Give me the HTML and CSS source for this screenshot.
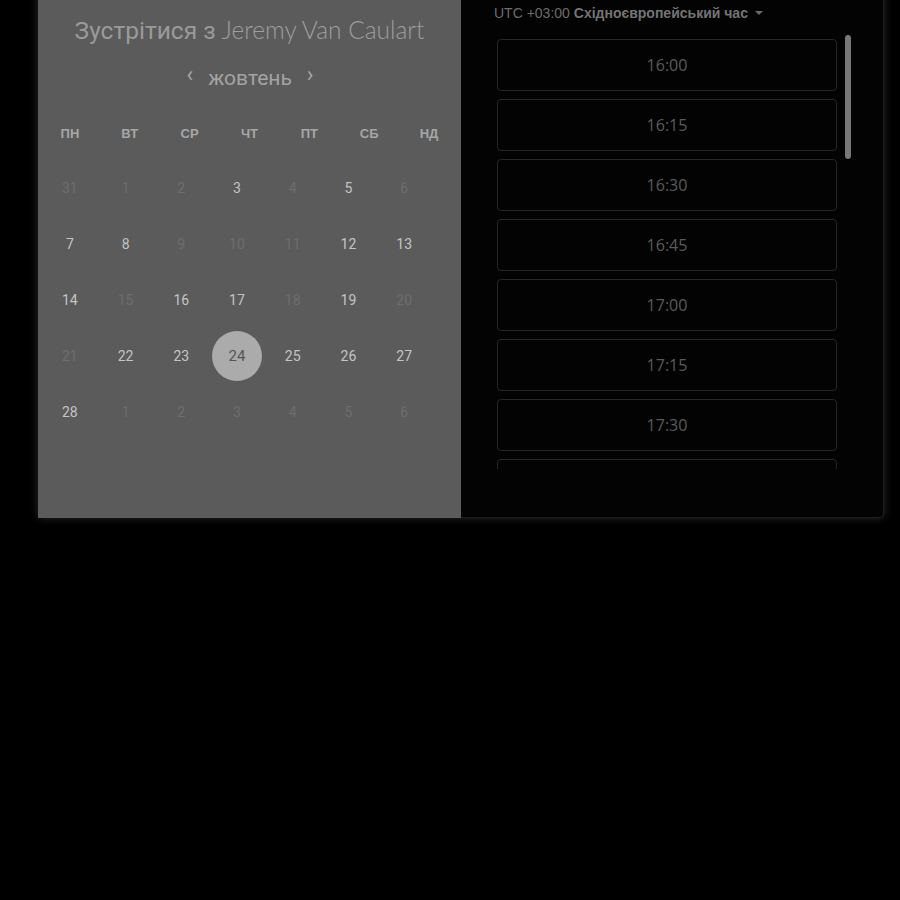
FILE: index.html
```html
<!DOCTYPE html>
<html lang="uk">
<head>
<meta charset="utf-8">
<title>Зустрітися з Jeremy Van Caulart</title>
<link rel="stylesheet" href="styles.css">
</head>
<body>
<div class="card">
  <section class="cal">
    <h1 class="title"><span class="cyr">Зустрітися з</span> <span class="name">Jeremy Van Caulart</span></h1>
    <div class="month">
      <span class="arrow">‹</span>
      <span class="mname">жовтень</span>
      <span class="arrow">›</span>
    </div>
    <div class="weekdays">
      <span>ПН</span><span>ВТ</span><span>СР</span><span>ЧТ</span><span>ПТ</span><span>СБ</span><span>НД</span>
    </div>
    <div class="days">
      <span class="off">31</span><span class="off">1</span><span class="off">2</span><span class="on">3</span><span class="off">4</span><span class="on">5</span><span class="off">6</span>
      <span class="on">7</span><span class="on">8</span><span class="off">9</span><span class="off">10</span><span class="off">11</span><span class="on">12</span><span class="on">13</span>
      <span class="on">14</span><span class="off">15</span><span class="on">16</span><span class="on">17</span><span class="off">18</span><span class="on">19</span><span class="off">20</span>
      <span class="off">21</span><span class="on">22</span><span class="on">23</span><span class="sel"><b>24</b></span><span class="on">25</span><span class="on">26</span><span class="on">27</span>
      <span class="on">28</span><span class="off">1</span><span class="off">2</span><span class="off">3</span><span class="off">4</span><span class="off">5</span><span class="off">6</span>
    </div>
  </section>
  <section class="times">
    <div class="tz">UTC +03:00 <strong>Східноєвропейський час</strong> <span class="caret"></span></div>
    <div class="slots-wrap">
      <div class="slots">
        <div class="slot">16:00</div>
        <div class="slot">16:15</div>
        <div class="slot">16:30</div>
        <div class="slot">16:45</div>
        <div class="slot">17:00</div>
        <div class="slot">17:15</div>
        <div class="slot">17:30</div>
        <div class="slot"></div>
      </div>
      <div class="thumb"></div>
    </div>
  </section>
</div>
</body>
</html>
```
FILE: styles.css
```css
html, body {
  margin: 0;
  padding: 0;
  background: #000;
  height: 100%;
}
body {
  font-family: "Roboto", "Liberation Sans", sans-serif;
}
.card {
  display: flex;
  width: 846px;
  margin: -10px 0 0 38px;
  height: 528px;
  box-shadow: 0 0 9px rgba(60, 60, 60, 0.7);
  border-radius: 0 0 4px 4px;
}
.cal {
  width: 423px;
  flex: none;
  background: #5b5b5b;
  padding-top: 25px;
  box-sizing: border-box;
}
.title {
  margin: 0;
  text-align: center;
  font-size: 24.5px;
  line-height: 30px;
  font-weight: 400;
  color: #9a9a9a;
}
.title .cyr {
  font-family: "Roboto", sans-serif;
  font-weight: 400;
}
.title .name {
  font-family: "Lato", sans-serif;
  font-weight: 300;
  color: #9e9e9e;
}
.month {
  margin-top: 18px;
  height: 28px;
  display: flex;
  justify-content: center;
  align-items: center;
  gap: 15px;
  color: #a3a3a3;
  font-size: 21px;
  padding-left: 1px;
}
.month .arrow {
  font-size: 22px;
  line-height: 1;
  color: #a8a8a8;
  position: relative;
  top: -3px;
}
.month .mname {
  font-family: "Roboto", sans-serif;
}
.weekdays {
  margin-top: 32px;
  display: grid;
  grid-template-columns: repeat(7, 1fr);
  height: 20px;
  line-height: 20px;
  text-align: center;
  font-family: "Liberation Sans", Arial, sans-serif;
  font-weight: 700;
  font-size: 13px;
  color: #a6a6a6;
  padding: 0 2px;
}
.days {
  margin: 16px 0 0 4px;
  width: 390px;
  display: grid;
  grid-template-columns: repeat(7, 1fr);
  grid-auto-rows: 56px;
  text-align: center;
  font-family: "Roboto", sans-serif;
  font-size: 14px;
}
.days span {
  display: flex;
  align-items: center;
  justify-content: center;
}
.days .on { color: #c4c4c4; }
.days .off { color: #6e6e6e; }
.days .sel b {
  width: 50px;
  height: 50px;
  border-radius: 50%;
  background: #ababab;
  color: #555;
  font-weight: 400;
  display: flex;
  align-items: center;
  justify-content: center;
  font-size: 15px;
}
.times {
  flex: 1;
  background: #030303;
  border-right: 1px solid #1d1d1d;
  border-bottom: 1px solid #1d1d1d;
  border-radius: 0 0 4px 0;
  padding: 15px 0 0 33px;
  box-sizing: border-box;
  position: relative;
}
.tz {
  font-family: "Liberation Sans", Arial, sans-serif;
  font-size: 14px;
  line-height: 16px;
  color: #6c6c6c;
}
.tz strong {
  color: #747474;
}
.caret {
  display: inline-block;
  width: 0;
  height: 0;
  border-left: 4px solid transparent;
  border-right: 4px solid transparent;
  border-top: 4px solid #6c6c6c;
  vertical-align: middle;
  margin-left: 3px;
  position: relative;
  top: -1px;
}
.slots-wrap {
  position: relative;
  margin-top: 13px;
  height: 435px;
  overflow: hidden;
}
.slots {
  padding: 5px 0 0 3px;
  width: 340px;
  display: flex;
  flex-direction: column;
  gap: 8px;
}
.slot {
  height: 50px;
  border: 1px solid #262626;
  border-radius: 4px;
  display: flex;
  align-items: center;
  justify-content: center;
  font-family: "Open Sans", "Noto Sans", sans-serif;
  font-size: 16px;
  color: #5b5b5b;
  flex: none;
}
.thumb {
  position: absolute;
  left: 351px;
  top: 1px;
  width: 6px;
  height: 124px;
  border-radius: 3px;
  background: #777;
}
```
